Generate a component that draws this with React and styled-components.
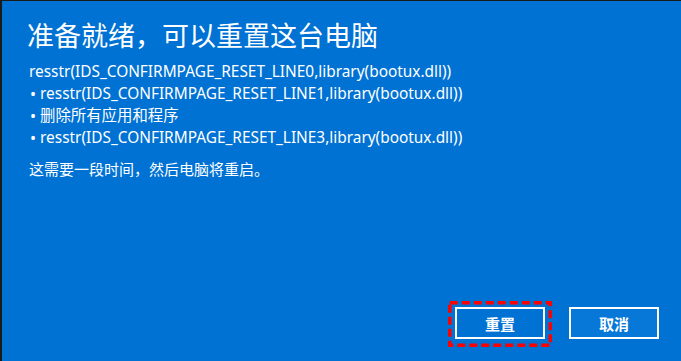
import React from "react";
import styled, { createGlobalStyle } from "styled-components";

const GlobalStyle = createGlobalStyle`
  html, body {
    margin: 0;
    padding: 0;
    background: #1b1b1b;
  }
  body {
    font-family: "Noto Sans", "Noto Sans CJK SC", sans-serif;
  }
`;

const Dialog = styled.div`
  box-sizing: border-box;
  width: 679px;
  height: 360px;
  margin: 1px 0 0 2px;
  background: #0072d4;
  color: #fff;
  display: flex;
  flex-direction: column;
  padding: 14px 22px 22px 25px;
`;

const Title = styled.h1`
  margin: 0 0 6px;
  font-size: 27px;
  font-weight: 400;
  line-height: 40px;
  font-family: "Noto Sans CJK SC", sans-serif;
`;

const Lines = styled.div`
  display: flex;
  flex-direction: column;
  font-size: 15.4px;
  line-height: 22px;
`;

const Line = styled.div`
  display: flex;
  align-items: center;
  padding-left: ${(p) => (p.$bullet ? "3px" : "2px")};
  gap: 4px;
  &::before {
    content: ${(p) => (p.$bullet ? '"•"' : "none")};
    font-size: 16px;
  }
`;

const Note = styled.p`
  margin: 9px 0 0 2px;
  font-size: 15px;
  line-height: 22px;
`;

const Actions = styled.div`
  margin-top: auto;
  display: flex;
  justify-content: flex-end;
  gap: 24px;
`;

const Marked = styled.div`
  position: relative;
  display: flex;
`;

const DashFrame = styled.svg`
  position: absolute;
  left: -7px;
  top: -6px;
  width: 104px;
  height: 46px;
  overflow: visible;
  pointer-events: none;
`;

const Button = styled.button`
  box-sizing: border-box;
  width: 90px;
  height: 32px;
  border: 2px solid #fff;
  background: ${(p) => (p.$secondary ? "#0778d8" : "#0072d4")};
  color: #fff;
  font-family: "Noto Sans CJK SC", sans-serif;
  font-size: 15px;
  font-weight: 700;
  cursor: pointer;
`;

export default function App() {
  return (
    <>
      <GlobalStyle />
      <Dialog>
        <Title>准备就绪，可以重置这台电脑</Title>
        <Lines>
          <Line>resstr(IDS_CONFIRMPAGE_RESET_LINE0,library(bootux.dll))</Line>
          <Line $bullet>resstr(IDS_CONFIRMPAGE_RESET_LINE1,library(bootux.dll))</Line>
          <Line $bullet>删除所有应用和程序</Line>
          <Line $bullet>resstr(IDS_CONFIRMPAGE_RESET_LINE3,library(bootux.dll))</Line>
        </Lines>
        <Note>这需要一段时间，然后电脑将重启。</Note>
        <Actions>
          <Marked>
            <Button>重置</Button>
            <DashFrame viewBox="0 0 104 46">
              <rect
                x="1.75"
                y="1.75"
                width="100.5"
                height="42.5"
                fill="none"
                stroke="#ff0000"
                strokeWidth="3.5"
                strokeDasharray="8 4"
              />
            </DashFrame>
          </Marked>
          <Button $secondary>取消</Button>
        </Actions>
      </Dialog>
    </>
  );
}
